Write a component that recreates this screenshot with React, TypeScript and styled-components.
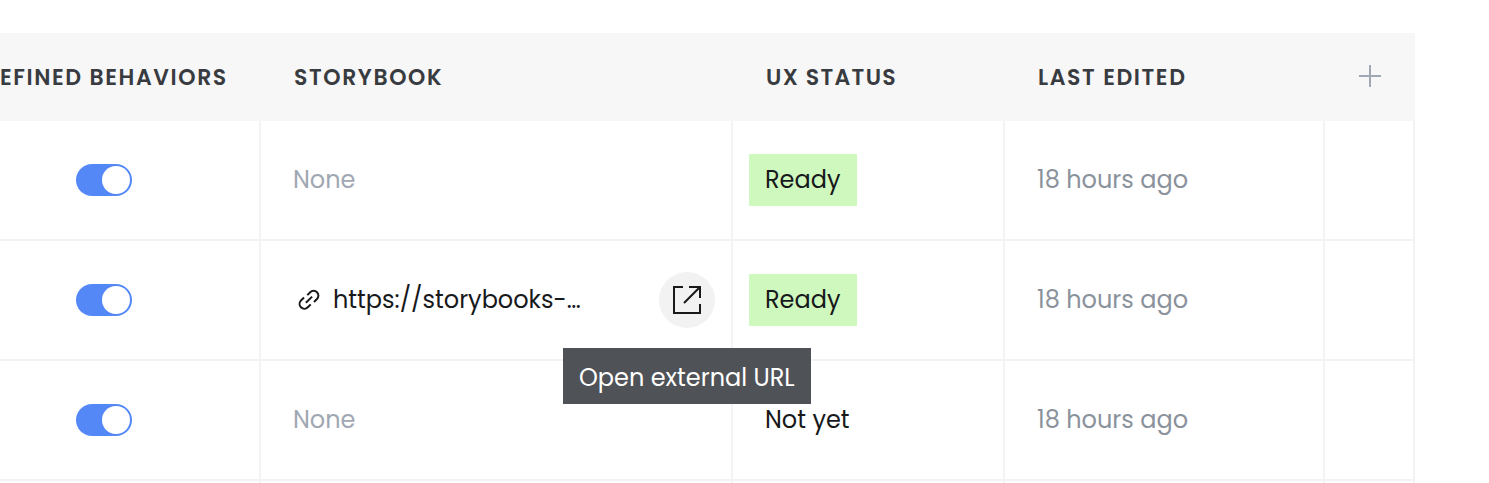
import React from "react";
import styled, { createGlobalStyle } from "styled-components";

const GlobalStyle = createGlobalStyle`
  *, *::before, *::after { box-sizing: border-box; }
  html, body { margin: 0; background: #fff; overflow: hidden; }
  body { font-family: Poppins, Inter, sans-serif; color: #17191b; }
`;

const Page = styled.main`
  width: 100%;
  height: 483px;
  padding-top: 33px;
  overflow: hidden;
`;

const Row = styled.div`
  display: grid;
  grid-template-columns: 261px 472px 272px 320px 90px;
  width: 1415px;
`;

const HeaderRow = styled(Row)`
  height: 88px;
  background: #f7f7f7;
`;

const HeaderCell = styled.div<{ $indent?: number }>`
  display: flex;
  align-items: center;
  padding-left: ${(p) => p.$indent ?? 33}px;
  padding-top: 1px;
`;

const ActionCell = styled.div`
  display: flex;
  align-items: center;
  padding: 0 0 2px 34px;
`;

const Cell = styled.div<{ $indent?: number }>`
  display: flex;
  align-items: center;
  height: 120px;
  padding-left: ${(p) => p.$indent ?? 32}px;
  border-right: 2px solid #f3f3f4;
  border-bottom: 2px solid #f3f3f4;
`;

const Label = styled.span<{ $track?: number }>`
  font-size: 22px;
  line-height: 33px;
  font-weight: 600;
  color: #383b40;
  white-space: nowrap;
  letter-spacing: ${(p) => p.$track ?? 1.6}px;
`;

const Text = styled.span<{ $color?: string }>`
  font-size: 24px;
  line-height: 36px;
  font-weight: 400;
  white-space: nowrap;
  color: ${(p) => p.$color ?? "#17191b"};
`;

const Toggle = styled.button`
  display: flex;
  justify-content: flex-end;
  width: 56px;
  height: 32px;
  padding: 2px;
  border: 0;
  border-radius: 16px;
  background: #5588f7;
`;

const Knob = styled.span`
  width: 28px;
  height: 28px;
  border-radius: 50%;
  background: #fff;
`;

const Status = styled.div<{ $ready: boolean }>`
  display: flex;
  align-items: center;
  width: 108px;
  height: 52px;
  padding-left: 16px;
  background: ${(p) => (p.$ready ? "#cff8bf" : "transparent")};
`;

const LinkValue = styled.div`
  display: flex;
  align-items: center;
  gap: 12px;
  width: 100%;
  padding: 0 16px 0 5px;
`;

const OpenButton = styled.button`
  position: relative;
  display: grid;
  place-items: center;
  width: 56px;
  height: 56px;
  margin-left: auto;
  padding: 0;
  border: 0;
  border-radius: 50%;
  background: #f2f2f2;
`;

const Tooltip = styled.span`
  position: absolute;
  z-index: 2;
  top: 76px;
  left: 50%;
  transform: translateX(-50%);
  display: flex;
  align-items: center;
  width: 248px;
  height: 56px;
  padding: 3px 0 0 16px;
  background: #4f5257;
  font-family: Poppins, Inter, sans-serif;
`;

const PlusIcon = () => (
  <svg width="22" height="22" viewBox="0 0 22 22" stroke="#9fa8b3" strokeWidth="2">
    <path d="M11 0V22M0 11H22" />
  </svg>
);

const LinkIcon = () => (
  <svg width="23" height="24" viewBox="0 0 23 24" fill="none" stroke="#17191b" strokeWidth="2">
    <path d="M9.3 7.1 12.2 4.2A4.8 4.8 0 0 1 19 11L16 14" />
    <path d="M12.7 16.4 9.8 19.3A4.8 4.8 0 0 1 3 12.5L6 9.5" />
    <path d="M7.9 14.8 14.1 8.6" />
  </svg>
);

const ExternalIcon = () => (
  <svg width="28" height="28" viewBox="0 0 28 28" fill="none" stroke="#17191b" strokeWidth="2">
    <path d="M10 1H1V27H27V18M16 1H27V12M26.5 1.5L11 17" />
  </svg>
);

type Item = { url?: string; ready: boolean };

const items: Item[] = [
  { ready: true },
  { url: "https://storybooks-…", ready: true },
  { ready: false },
];

const TableRow = ({ url, ready }: Item) => (
  <Row>
    <Cell $indent={76}>
      <Toggle aria-label="Defined behaviors"><Knob /></Toggle>
    </Cell>
    <Cell>
      {url ? (
        <LinkValue>
          <LinkIcon />
          <Text>{url}</Text>
          <OpenButton>
            <ExternalIcon />
            <Tooltip><Text $color="#fff">Open external URL</Text></Tooltip>
          </OpenButton>
        </LinkValue>
      ) : (
        <Text $color="#9fa8b3">None</Text>
      )}
    </Cell>
    <Cell $indent={16}>
      <Status $ready={ready}><Text>{ready ? "Ready" : "Not yet"}</Text></Status>
    </Cell>
    <Cell><Text $color="#8a929c">18 hours ago</Text></Cell>
    <Cell />
  </Row>
);

export default function App() {
  return (
    <Page>
      <GlobalStyle />
      <HeaderRow>
        <HeaderCell $indent={0}><Label>EFINED BEHAVIORS</Label></HeaderCell>
        <HeaderCell><Label>STORYBOOK</Label></HeaderCell>
        <HeaderCell><Label $track={1.35}>UX STATUS</Label></HeaderCell>
        <HeaderCell><Label>LAST EDITED</Label></HeaderCell>
        <ActionCell><PlusIcon /></ActionCell>
      </HeaderRow>
      {items.map((item, i) => <TableRow key={i} {...item} />)}
      <Row><Cell /><Cell /><Cell /><Cell /><Cell /></Row>
    </Page>
  );
}
